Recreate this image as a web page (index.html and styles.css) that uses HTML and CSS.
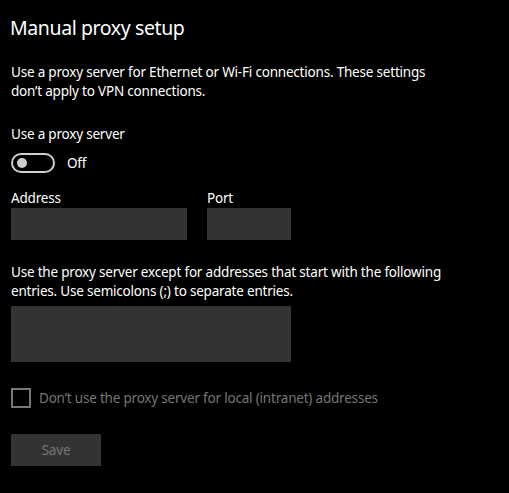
FILE: index.html
```html
<!DOCTYPE html>
<html lang="en">
<head>
<meta charset="utf-8">
<title>Manual proxy setup</title>
<link rel="stylesheet" href="styles.css">
</head>
<body>
<main class="page">
  <h1 class="title">Manual proxy setup</h1>
  <p class="desc desc-top">Use a proxy server for Ethernet or Wi-Fi connections. These settings don’t apply to VPN connections.</p>
  <div class="label use-label">Use a proxy server</div>
  <div class="toggle-row">
    <span class="toggle"><span class="knob"></span></span>
    <span class="toggle-text">Off</span>
  </div>
  <div class="addr-row">
    <div class="field">
      <div class="label">Address</div>
      <div class="input addr"></div>
    </div>
    <div class="field">
      <div class="label">Port</div>
      <div class="input port"></div>
    </div>
  </div>
  <p class="desc desc-except">Use the proxy server except for addresses that start with the following entries. Use semicolons (;) to separate entries.</p>
  <div class="input area"></div>
  <div class="check-row">
    <span class="box"></span>
    <span class="check-text">Don’t use the proxy server for local (intranet) addresses</span>
  </div>
  <button class="save" type="button">Save</button>
</main>
</body>
</html>
```
FILE: styles.css
```css
html, body {
  margin: 0;
  padding: 0;
  background: #000;
}
body {
  font-family: "Noto Sans", "Open Sans", sans-serif;
  color: #fff;
  font-size: 13.5px;
  letter-spacing: -0.2px;
  line-height: 19px;
}
.page {
  padding: 14px 0 0 11px;
  display: flex;
  flex-direction: column;
  align-items: flex-start;
}
.title {
  margin: 0 0 0 -1px;
  font-size: 19.5px;
  letter-spacing: -0.4px;
  line-height: 28px;
  font-weight: 400;
}
.desc {
  margin: 0;
  width: 446px;
}
.desc-top {
  margin-top: 21px;
}
.use-label {
  margin-top: 24px;
}
.toggle-row {
  margin-top: 9px;
  display: flex;
  align-items: center;
  gap: 12px;
}
.toggle {
  box-sizing: border-box;
  width: 44px;
  height: 20px;
  border: 2px solid #cfcfcf;
  border-radius: 10px;
  display: flex;
  align-items: center;
  padding-left: 4px;
}
.knob {
  width: 10px;
  height: 10px;
  border-radius: 50%;
  background: #cfcfcf;
}
.addr-row {
  margin-top: 16px;
  display: flex;
  gap: 20px;
}
.field {
  display: flex;
  flex-direction: column;
  gap: 0;
}
.input {
  background: #333;
  height: 32px;
}
.addr { width: 176px; }
.port { width: 84px; }
.desc-except {
  margin-top: 23px;
}
.area {
  margin-top: 5px;
  width: 280px;
  height: 56px;
}
.check-row {
  margin-top: 26px;
  display: flex;
  align-items: center;
  gap: 8px;
  color: #767676;
}
.box {
  box-sizing: border-box;
  width: 20px;
  height: 20px;
  border: 2px solid #767676;
}
.save {
  margin-top: 26px;
  width: 90px;
  height: 32px;
  border: 0;
  background: #333;
  color: #767676;
  font-family: inherit;
  font-size: 13.5px;
  letter-spacing: -0.2px;
  padding: 0;
}
```
